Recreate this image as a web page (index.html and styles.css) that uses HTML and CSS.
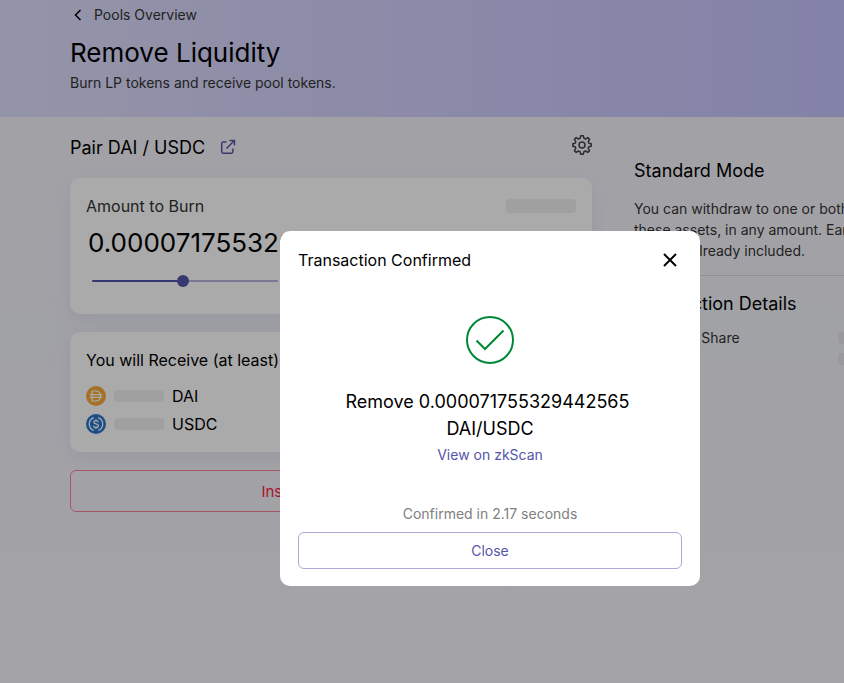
FILE: index.html
```
<!DOCTYPE html>
<html lang="en">
<head>
    <meta charset="UTF-8">
    <meta name="viewport" content="width=device-width, initial-scale=1.0">
    <title>Remove Liquidity</title>
    <link rel="stylesheet" href="styles.css">
</head>
<body>
    <header class="page-header">
        <a class="back-link" href="#">
            <svg width="16" height="16" viewBox="0 0 16 16"><path d="M10.500 3 5.500 8l5 5" /></svg>
            Pools Overview
        </a>
        <h1>Remove Liquidity</h1>
        <p>Burn LP tokens and receive pool tokens.</p>
    </header>

    <div class="page">
        <main>
            <div class="pair-bar">
                <h2>Pair DAI / USDC</h2>
                <a class="pair-link" href="#" aria-label="Open pair">
                    <svg width="16" height="16" viewBox="0 0 16 16"><path d="M6.500 3H3.300Q1.700 3 1.700 4.600v8Q1.700 14.200 3.300 14.200h8Q12.900 14.200 12.900 12.600V9.500M9.500 1.500h5v5M14.200 1.800 6.500 9.500" /></svg>
                </a>
                <button class="settings" type="button" aria-label="Settings">
                    <svg width="24" height="24" viewBox="0 0 24 24"><path d="M10.700 2.800h2.600l.6 2.500 1.700.7 2.200-1.400 1.800 1.800L18.200 8.600l.7 1.700 2.300.4v2.600l-2.300.4-.7 1.700 1.400 2.200-1.800 1.800-2.200-1.400-1.700.7-.6 2.500h-2.600l-.6-2.500-1.700-.7-2.200 1.400-1.800-1.800 1.400-2.200-.7-1.700-2.300-.4v-2.600l2.300-.4.7-1.700-1.400-2.200 1.800-1.800 2.200 1.400 1.700-.7z" /><circle cx="12" cy="12" r="3" /></svg>
                </button>
            </div>

            <section class="card amount">
                <div class="card-row">
                    <label for="amount">Amount to Burn</label>
                    <span class="skeleton wide"></span>
                </div>
                <input type="text" id="amount" value="0.000071755329442565">
                <input type="range" id="percent" min="0" max="100" value="49" aria-label="Share to burn">
            </section>

            <section class="card receive">
                <h3>You will Receive (at least)</h3>
                <ul>
                    <li>
                        <svg width="20" height="20" viewBox="0 0 20 20"><circle cx="10" cy="10" r="10" fill="#f5ac37" /><path d="M6 5h3.500c3 0 5 2 5 5s-2 5-5 5H6zM3.800 8.700h12.400M3.800 11.300h12.400" fill="none" stroke="#fff" stroke-width="1.200" /></svg>
                        <span class="skeleton"></span>
                        DAI
                    </li>
                    <li>
                        <svg width="20" height="20" viewBox="0 0 20 20"><circle cx="10" cy="10" r="10" fill="#2775ca" /><g fill="none" stroke="#fff" stroke-width="1.300"><path d="M7.800 3.600a6.800 6.800 0 0 0 0 12.800M12.200 3.600a6.800 6.800 0 0 1 0 12.800" /><path d="M12.300 8.200c-.1-1-1-1.600-2.300-1.600-1.400 0-2.200.6-2.200 1.600 0 2.300 4.600 1.200 4.600 3.600 0 1-.9 1.700-2.400 1.700-1.400 0-2.300-.7-2.400-1.800M10 5.200v1.400M10 13.500v1.400" /></g></svg>
                        <span class="skeleton"></span>
                        USDC
                    </li>
                </ul>
            </section>

            <button class="submit" type="button">Insufficient Balance</button>
        </main>

        <aside>
            <h2>Standard Mode</h2>
            <p>You can withdraw to one or both of these assets, in any amount. Earned fees are already included.</p>
            <hr>
            <h2>Transaction Details</h2>
            <dl>
                <dt>Your Pool Share</dt>
                <dd><span class="skeleton"></span></dd>
                <dt>Pool Fee</dt>
                <dd><span class="skeleton"></span></dd>
            </dl>
        </aside>
    </div>

    <div class="overlay">
        <div class="modal" role="dialog" aria-modal="true" aria-labelledby="modalTitle">
            <div class="modal-header">
                <span id="modalTitle">Transaction Confirmed</span>
                <button class="dismiss" type="button" aria-label="Dismiss">
                    <svg width="24" height="24" viewBox="0 0 24 24"><path d="M6 6l12 12M18 6 6 18" /></svg>
                </button>
            </div>
            <svg class="check" width="48" height="48" viewBox="0 0 48 48"><circle cx="24" cy="24" r="23" /><path d="M10.500 24.500l8.500 8.500 18.500-18.500" /></svg>
            <h2>Remove 0.000071755329442565&nbsp;<br>DAI/USDC</h2>
            <a class="scan-link" href="#">View on zkScan</a>
            <p class="elapsed">Confirmed in 2.17 seconds</p>
            <button class="close" type="button">Close</button>
        </div>
    </div>
</body>
</html>
```
FILE: styles.css
```
* {
    box-sizing: border-box;
}

body {
    margin: 0;
    min-height: 100vh;
    overflow: hidden;
    font-family: Inter, sans-serif;
    font-size: 16px;
    line-height: 24px;
    color: #000;
    background: linear-gradient(#f5f4fa, #f2f3fa 50%, #f7f6fb);
}

h1, h2, h3, p, ul, dl, dd {
    margin: 0;
    padding: 0;
    font-weight: 400;
}

h2 {
    font-size: 18px;
    line-height: 27px;
}

button, input {
    font-family: inherit;
    margin: 0;
    padding: 0;
    border: none;
    background: none;
}

svg {
    flex: none;
}

.page-header {
    height: 117px;
    padding: 3px 70px 0;
    background: linear-gradient(90deg, #dfdffc, #d4d2fd 40%, #c5c3fc);
}

.back-link {
    display: flex;
    align-items: center;
    gap: 8px;
    font-size: 14px;
    color: #333;
    text-decoration: none;
}

.back-link svg {
    fill: none;
    stroke: #000;
    stroke-width: 1.5;
}

h1 {
    margin-top: 7px;
    font-size: 26px;
    line-height: 38px;
}

.page-header p {
    font-size: 14px;
    line-height: 22px;
    color: #333;
}

.page {
    display: grid;
    grid-template-columns: minmax(522px, 1fr) 254px;
    column-gap: 42px;
    padding: 14px 0 0 70px;
}

.pair-bar {
    display: flex;
    align-items: center;
    gap: 15px;
    height: 32px;
    margin-bottom: 15px;
}

.pair-link {
    display: flex;
}

.pair-link svg {
    fill: none;
    stroke: #5555aa;
    stroke-width: 1.5;
}

.settings {
    display: flex;
    align-self: flex-start;
    margin: 2px -2px 0 auto;
}

.settings svg {
    fill: none;
    stroke: #444;
    stroke-width: 1.5;
    stroke-linejoin: round;
}

.card {
    margin-bottom: 18px;
    padding: 16px;
    border-radius: 10px;
    background: #fff;
    box-shadow: 0 6px 20px rgba(120, 120, 180, 0.12);
}

.card-row {
    display: flex;
    justify-content: space-between;
    align-items: center;
}

.card-row label {
    color: #333;
}

.skeleton {
    width: 50px;
    height: 12px;
    border-radius: 4px;
    background: #f0f0f0;
}

.skeleton.wide {
    width: 70px;
    height: 14px;
}

.amount {
    height: 136px;
}

#amount {
    display: block;
    width: 100%;
    height: 38px;
    margin-top: 5px;
    padding: 0 2px;
    font-size: 26px;
}

#percent {
    display: block;
    appearance: none;
    width: 186px;
    height: 12px;
    margin: 14px 6px 0;
}

#percent::-webkit-slider-runnable-track {
    height: 2px;
    border-radius: 1px;
    background: linear-gradient(90deg, #5555aa 49%, #b4b4dc 49%);
}

#percent::-webkit-slider-thumb {
    appearance: none;
    width: 12px;
    height: 12px;
    margin-top: -5px;
    border-radius: 50%;
    background: #5555aa;
}

.receive {
    height: 120px;
}

.receive h3 {
    margin-bottom: 12px;
    font-size: 16px;
}

.receive ul {
    display: grid;
    gap: 4px;
    list-style: none;
}

.receive li {
    display: flex;
    align-items: center;
    gap: 8px;
}

.submit {
    display: block;
    width: 100%;
    height: 42px;
    border: 1px solid #ff8098;
    border-radius: 6px;
    font-size: 15px;
    color: #ff1744;
}

aside {
    padding-top: 26px;
}

aside p {
    margin-top: 14px;
    font-size: 14px;
    line-height: 21px;
    color: #333;
}

aside hr {
    height: 1px;
    margin: 14px 0;
    border: none;
    background: #d8d8de;
}

aside dl {
    display: grid;
    grid-template-columns: 1fr auto;
    align-items: center;
    margin-top: 10px;
    font-size: 14px;
    line-height: 21px;
    color: #333;
}

dd {
    display: flex;
}

aside .skeleton {
    background: #e8e8ec;
}

.overlay {
    position: fixed;
    inset: 0;
    display: flex;
    align-items: center;
    justify-content: center;
    padding: 134px 0 0 136px;
    background: rgba(0, 0, 0, 0.333);
}

.modal {
    display: flex;
    flex-direction: column;
    align-items: center;
    width: 420px;
    padding: 17px 18px;
    border-radius: 10px;
    background: #fff;
    text-align: center;
}

.modal-header {
    display: flex;
    justify-content: space-between;
    align-items: center;
    width: 100%;
}

.dismiss {
    display: flex;
}

.dismiss svg {
    fill: none;
    stroke: #000;
    stroke-width: 2;
}

.check {
    margin: 44px 0 24px;
    fill: none;
    stroke: #008837;
    stroke-width: 2;
}

.scan-link {
    margin-top: 1px;
    font-size: 14px;
    color: #5555aa;
    text-decoration: none;
}

.elapsed {
    margin: 35px 0 6px;
    font-size: 14px;
    color: #808080;
}

.close {
    width: 100%;
    height: 37px;
    border: 1px solid #aaaad5;
    border-radius: 6px;
    font-size: 14px;
    color: #5555aa;
}
```
